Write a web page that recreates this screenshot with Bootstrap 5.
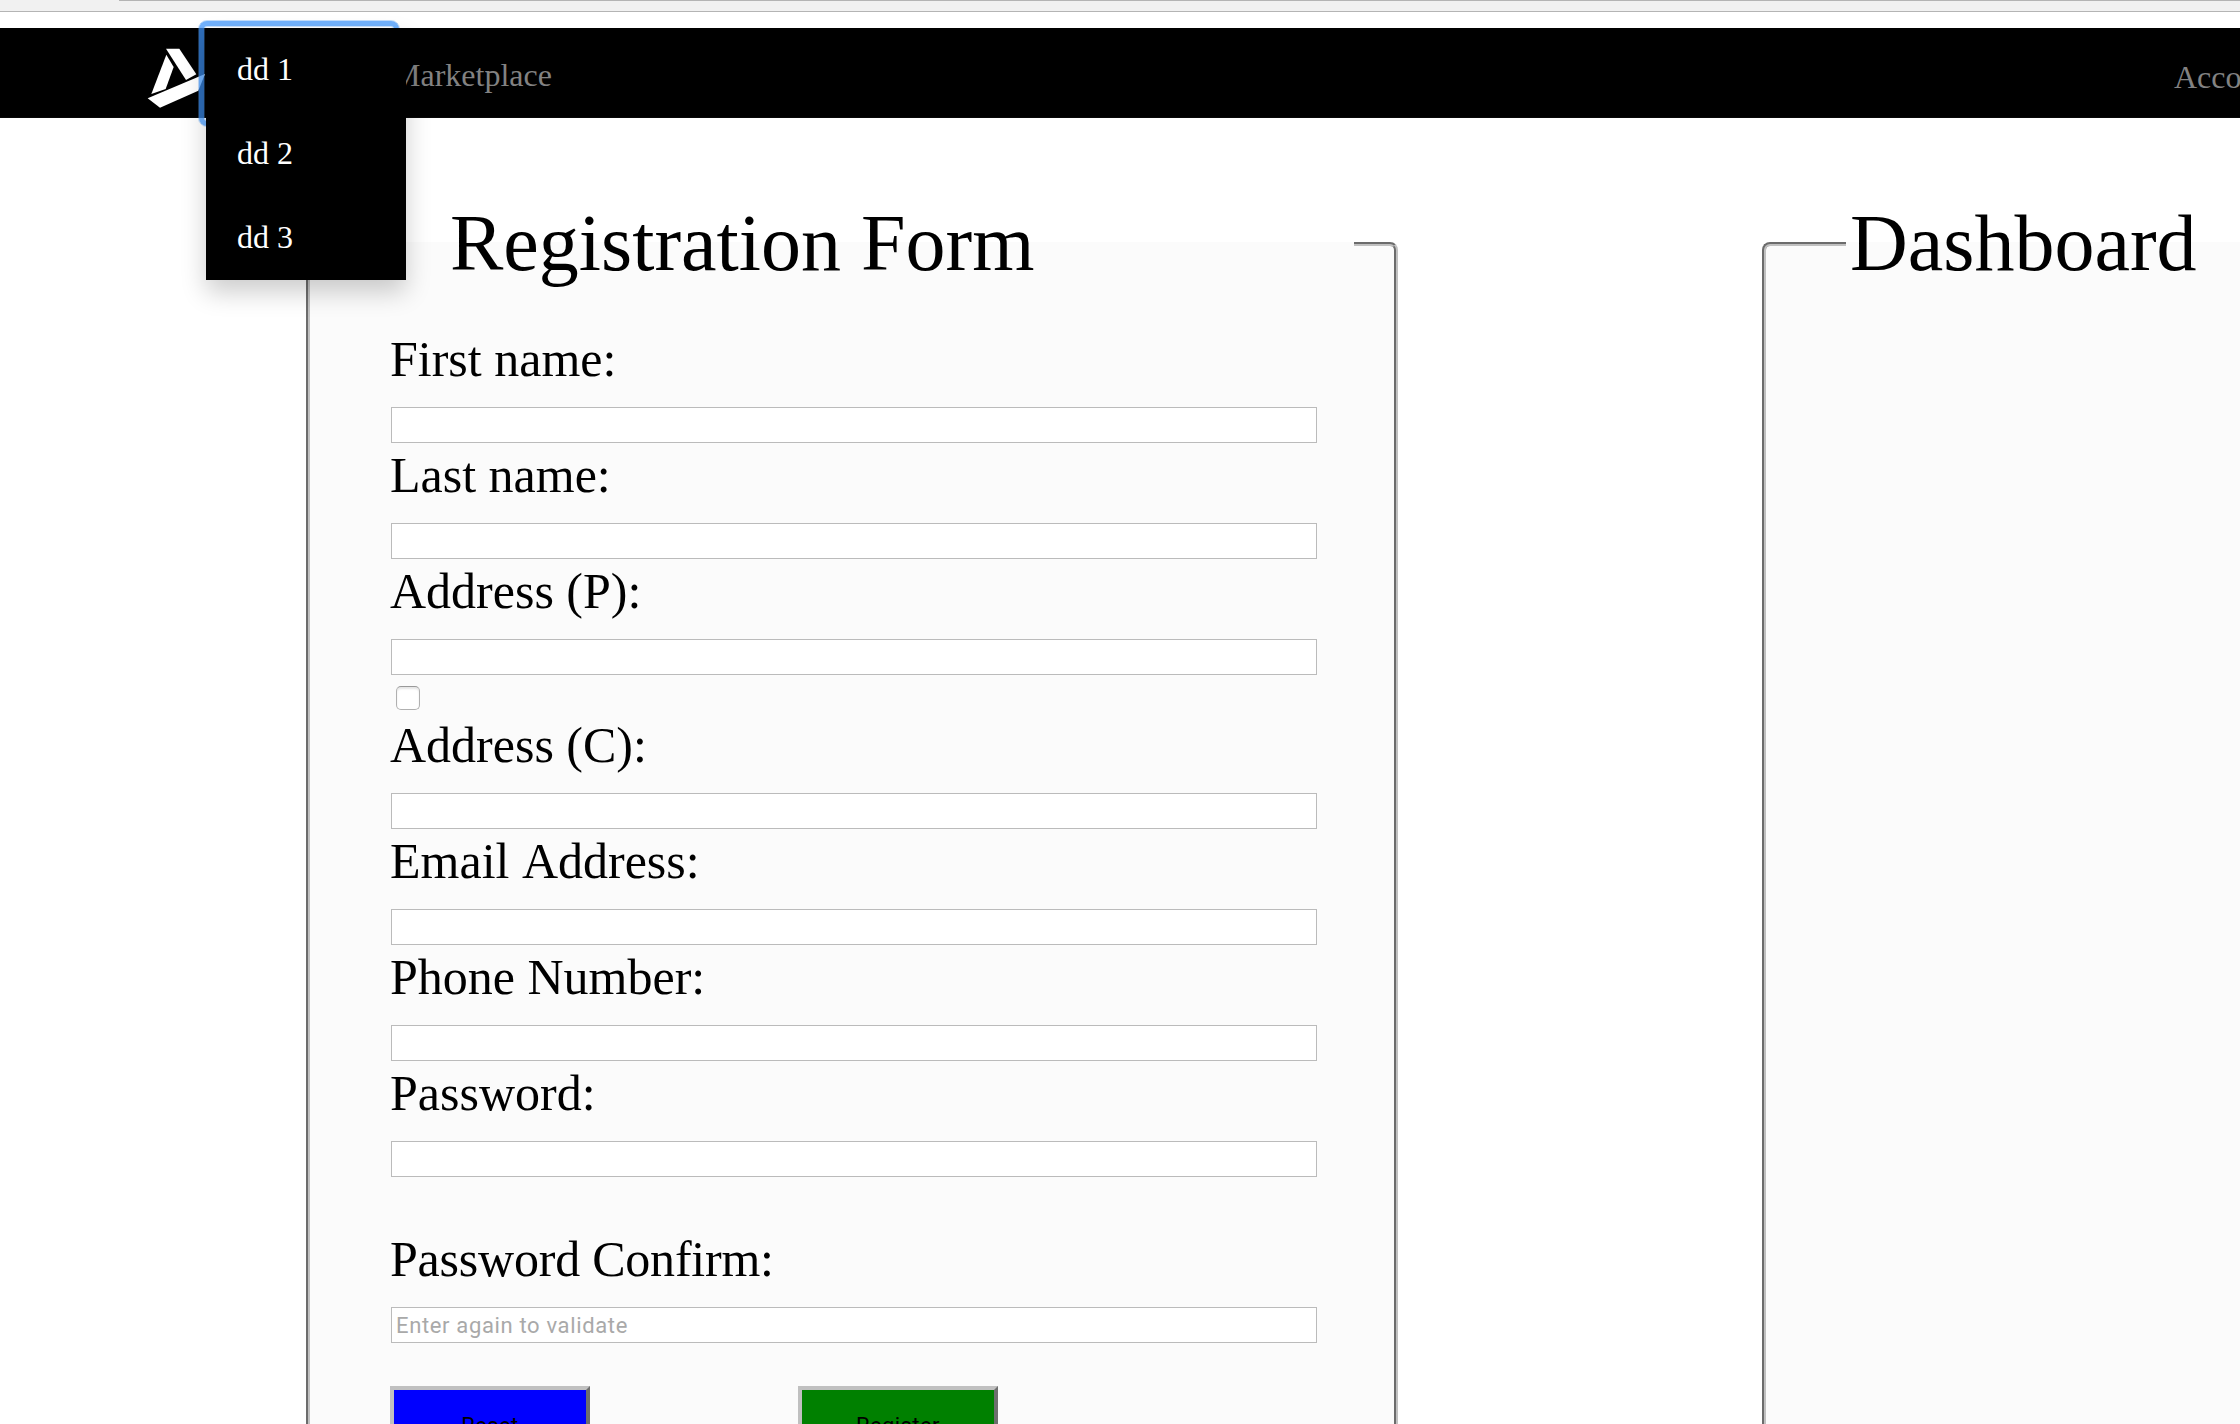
<!DOCTYPE html>
<html lang="en">
<head>
<meta charset="utf-8">
<title>Registration Form</title>
<link href="https://cdn.jsdelivr.net/npm/bootstrap@5.3.0/dist/css/bootstrap.min.css" rel="stylesheet">
<style>
body{height:1424px;font-family:"Liberation Serif",serif;color:#000;background:#fff}
.chrome-strip{height:12px;background:#f1f1f1;border-bottom:1px solid #b4b4b4;padding-left:119px}
.chrome-strip div{height:1px;background:#b4b4b4}
.topbar{height:90px;margin-top:16px;padding:0 0 0 144px;background:#000;border-bottom:1px solid #080808;font-size:32px;line-height:36px}
.topbar .nav-link{color:#828282;padding:0}
.logo{width:66px;height:66px;margin-top:10px}
.drop{width:182px;height:90px}
.focus-glow{left:-12px;top:-8px;width:202px;height:107px;border:1px solid rgba(80,155,240,.35);border-radius:9px;box-shadow:inset 0 0 0 5px rgba(60,148,255,.62),inset 0 0 0 6px rgba(80,155,240,.3)}
.topbar .dropdown-menu{left:-4px;top:0;width:200px;height:252px;min-width:0;padding:0;margin:0;background:#000;border:0;border-radius:0;box-shadow:0 12px 24px rgba(0,0,0,.2);font-size:32px}
.topbar .dropdown-item{height:84px;padding:23px 31px;line-height:36px;color:#fff}
.market{margin-top:29px}
.account{margin-top:31px;width:66px}
.panels{padding-left:306px;gap:364px;margin-top:80px;height:1226px}
fieldset.panel{border:4px groove #c0c0c0;border-radius:8px;background:#fbfbfb;height:1400px;flex:none}
.panel legend{float:none;font-size:80px;line-height:90px;margin:0;padding:0 0 2px}
.reg{width:1092px}
.panel.reg legend{width:954px;margin-left:90px;padding-left:50px}
.dash{width:1000px}
.panel.dash legend{width:800px;margin-left:80px;padding-left:4px}
.reg form{padding:37px 77px 0 80px}
.reg label{font-size:50px;line-height:64px;margin-bottom:16px;display:block;font-kerning:none}
.reg .form-control{height:36px;width:926px;margin-left:1px;border:1px solid #bbb;border-radius:0;padding:0 4px;font:500 22px/34px Roboto,sans-serif;background:#fff}
.reg .form-control::placeholder{color:#a9a9a9;opacity:1;font-weight:400;letter-spacing:.65px}
.check-row{height:38px;padding:11px 0 0 6px}
.check-row .form-check-input{width:24px;height:24px;margin:0;border:1px solid #b0b0b0;border-top-color:#999;border-radius:5px;box-shadow:inset 0 2px 2px rgba(0,0,0,.1);display:block}
.confirm{margin-top:50px}
.confirm label{letter-spacing:-.22px}
.actions{margin-top:43px;gap:208px}
.actions .btn{width:200px;height:80px;border:4px solid;border-radius:0;border-color:#c0c0c0 #6e6e6e #6e6e6e #c0c0c0;color:#000;font:22px/26px Roboto,sans-serif;letter-spacing:.4px;padding:0}
.reset{background:#00f}
.register{background:#008000}
</style>
<script src="https://cdn.jsdelivr.net/npm/bootstrap@5.3.0/dist/js/bootstrap.bundle.min.js"></script>
</head>
<body class="overflow-hidden">
<div class="chrome-strip"><div></div></div>
<nav class="topbar navbar navbar-expand align-items-start justify-content-start flex-nowrap">
  <a href="#" class="align-self-center"><svg class="logo d-block" viewBox="42 75 198 198" fill="#fff">
    <path d="M108 86h40l51 77-31 17z"/><path d="M109 104l22 37-24 66-43 15z"/><path d="M53 235l172-73-20 50-115 51z"/></svg></a>
  <div class="drop dropdown position-relative">
    <div class="focus-glow position-absolute"></div>
    <div class="dropdown-menu show">
      <a class="dropdown-item" href="#">dd 1</a>
      <a class="dropdown-item" href="#">dd 2</a>
      <a class="dropdown-item" href="#">dd 3</a>
    </div>
  </div>
  <a class="nav-link market align-self-start" href="#">Marketplace</a>
  <a class="nav-link account ms-auto" href="#">Account</a>
</nav>
<main class="panels d-flex overflow-visible">
  <fieldset class="panel reg">
    <legend>Registration Form</legend>
    <form>
      <div><label for="fn">First name:</label><input id="fn" class="form-control"></div>
      <div><label for="ln">Last name:</label><input id="ln" class="form-control"></div>
      <div><label for="ap">Address (P):</label><input id="ap" class="form-control"></div>
      <div class="check-row"><input type="checkbox" class="form-check-input"></div>
      <div><label for="ac">Address (C):</label><input id="ac" class="form-control"></div>
      <div><label for="em">Email Address:</label><input id="em" class="form-control"></div>
      <div><label for="ph">Phone Number:</label><input id="ph" class="form-control"></div>
      <div><label for="pw">Password:</label><input id="pw" type="password" class="form-control"></div>
      <div class="confirm"><label for="pc">Password Confirm:</label><input id="pc" type="password" class="form-control" placeholder="Enter again to validate"></div>
      <div class="actions d-flex">
        <button type="reset" class="btn reset">Reset</button>
        <button type="submit" class="btn register">Register</button>
      </div>
    </form>
  </fieldset>
  <fieldset class="panel dash"><legend>Dashboard</legend></fieldset>
</main>
</body>
</html>
